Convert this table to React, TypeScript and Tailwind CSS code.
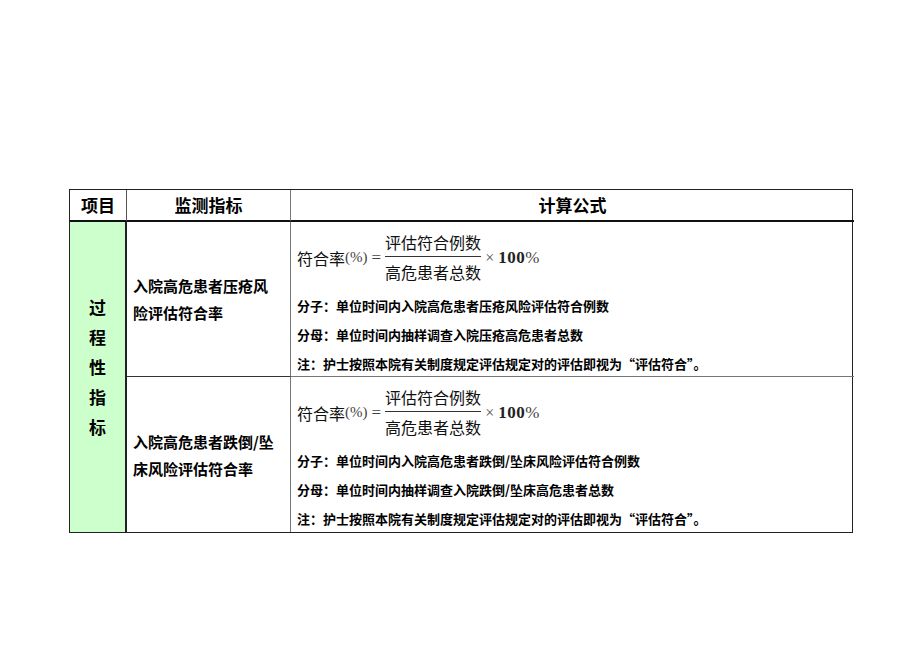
import { Fragment } from "react";

const cjk = "font-['Noto_Sans_CJK_SC',sans-serif]";

const rows = [
  {
    name: ["入院高危患者压疮风", "险评估符合率"],
    numerator: "单位时间内入院高危患者压疮风险评估符合例数",
    denominator: "单位时间内抽样调查入院压疮高危患者总数",
  },
  {
    name: ["入院高危患者跌倒/坠", "床风险评估符合率"],
    numerator: "单位时间内入院高危患者跌倒/坠床风险评估符合例数",
    denominator: "单位时间内抽样调查入院跌倒/坠床高危患者总数",
  },
];

function Formula() {
  return (
    <div className="flex items-center text-[16px] text-[#111]">
      <span className={cjk}>符合率</span>
      <span className="font-['Liberation_Serif',serif] text-[15px] text-[#444]">(%)</span>
      <span className="mx-1 font-['Liberation_Serif',serif] text-[17px] text-[#444]">=</span>
      <div className="flex flex-col items-center">
        <span className={`${cjk} leading-[28px]`}>评估符合例数</span>
        <span className="h-px w-[96px] bg-[#333]" />
        <span className={`${cjk} leading-[30px]`}>高危患者总数</span>
      </div>
      <span className="ml-1 font-['Liberation_Serif',serif] text-[16px] text-[#555]">×</span>
      <span className="ml-1 font-['Liberation_Serif',serif] text-[17px] font-bold tracking-[0.5px] text-[#222]">
        100<span className="font-normal text-[#444]">%</span>
      </span>
    </div>
  );
}

export default function App() {
  return (
    <div className={`min-h-[651px] bg-white pt-[189px] pl-[69px] ${cjk} text-black`}>
      <div className="grid w-[784px] grid-cols-[57px_164px_563px] grid-rows-[32px_155px_155px] border border-[#222]">
        <div className="flex items-center justify-center border-r border-b-2 border-r-[#555] border-b-[#111] text-[17px] font-bold">
          项目
        </div>
        <div className="flex items-center justify-center border-r border-b-2 border-r-[#777] border-b-[#111] text-[17px] font-bold">
          监测指标
        </div>
        <div className="flex items-center justify-center border-b-2 border-b-[#111] text-[17px] font-bold">
          计算公式
        </div>

        <div className="row-span-2 flex flex-col items-center justify-center gap-[7px] border-r-2 border-r-[#222] bg-[#ccffcc] pb-[22px] text-[17px] font-bold">
          {"过程性指标".split("").map((c) => (
            <span key={c} className="leading-[23px]">
              {c}
            </span>
          ))}
        </div>

        {rows.map((r, i) => (
          <Fragment key={i}>
            <div
              className={`flex flex-col justify-center border-r border-r-[#777] pl-[6px] text-[15px] font-bold leading-[27px] ${
                i === 0 ? "border-b border-b-[#333]" : ""
              }`}
            >
              <span>{r.name[0]}</span>
              <span>{r.name[1]}</span>
            </div>
            <div className={`flex flex-col pl-[6px] pt-[6px] ${i === 0 ? "border-b border-b-[#777]" : ""}`}>
              <Formula />
              <div className="mt-[9px] flex flex-col gap-[10px] text-[13px] font-bold leading-[19px]">
                <span>分子：{r.numerator}</span>
                <span>分母：{r.denominator}</span>
                <span>注：护士按照本院有关制度规定评估规定对的评估即视为“评估符合”。</span>
              </div>
            </div>
          </Fragment>
        ))}
      </div>
    </div>
  );
}
